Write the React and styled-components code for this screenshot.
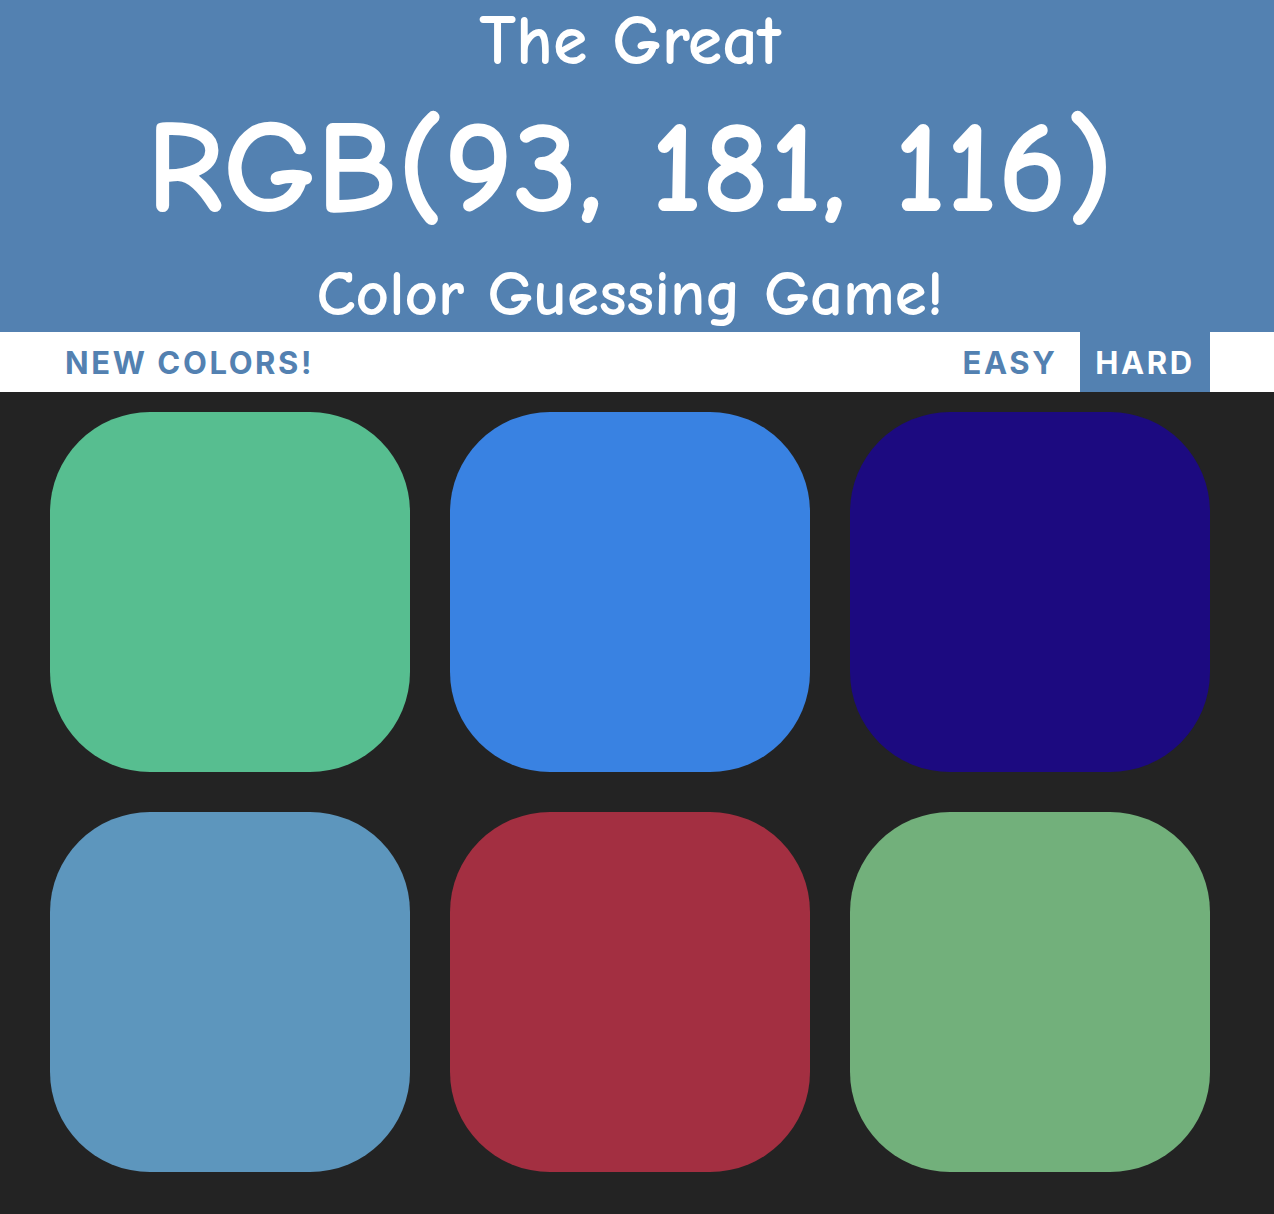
import React from "react";
import styled, { createGlobalStyle } from "styled-components";

const GlobalStyle = createGlobalStyle`
  body {
    margin: 0;
    background: #232323;
    font-family: "Liberation Sans", Arial, sans-serif;
  }
`;

const colors = [
  "#57be90",
  "#3982e2",
  "#1c0a80",
  "#5d96bd",
  "#a32f41",
  "#72b07b",
];

function App() {
  return (
    <>
      <GlobalStyle />
      <Header>
        <SmallLine size="70px">The Great</SmallLine>
        <ColorDisplay>RGB(93, 181, 116)</ColorDisplay>
        <SmallLine size="65px">Color Guessing Game!</SmallLine>
      </Header>
      <Stripe>
        <StripeInner>
          <StripeButton>NEW COLORS!</StripeButton>
          <Modes>
            <ModeButton>EASY</ModeButton>
            <ModeButton selected>HARD</ModeButton>
          </Modes>
        </StripeInner>
      </Stripe>
      <Board>
        {colors.map((c, i) => (
          <Square key={i} style={{ background: c }} />
        ))}
      </Board>
    </>
  );
}

const Header = styled.header`
  background: #5381b1;
  color: #fff;
  text-align: center;
  font-family: "Comic Sans MS", "Comic Neue", "Open Sans", sans-serif;
  font-weight: 700;
  height: 332px;
  box-sizing: border-box;
  padding: 4px 14px 0 0;
  display: flex;
  flex-direction: column;
  align-items: center;
`;

const SmallLine = styled.h2`
  margin: 0;
  font-size: ${(p) => p.size};
  font-weight: 700;
  line-height: 75px;
`;

const ColorDisplay = styled.h1`
  margin: 0;
  font-size: 132px;
  font-weight: 700;
  line-height: 178px;
`;

const Stripe = styled.div`
  background: #fff;
  height: 60px;
`;

const StripeInner = styled.div`
  width: 1160px;
  margin-left: 50px;
  height: 100%;
  display: flex;
  justify-content: space-between;
`;

const StripeButton = styled.button`
  border: none;
  background: transparent;
  color: #5381b1;
  font-family: "Inter", "Liberation Sans", sans-serif;
  font-weight: 700;
  font-size: 31px;
  letter-spacing: 2.6px;
  text-transform: uppercase;
  height: 100%;
  padding: 0 15px;
  cursor: pointer;
`;

const Modes = styled.div`
  display: flex;
  gap: 10px;
  height: 100%;
`;

const ModeButton = styled(StripeButton)`
  width: ${(p) => (p.selected ? "130px" : "120px")};
  background: ${(p) => (p.selected ? "#5381b1" : "#fff")};
  color: ${(p) => (p.selected ? "#fff" : "#5381b1")};
  padding: 0;
`;

const Board = styled.div`
  display: grid;
  grid-template-columns: repeat(3, 360px);
  grid-auto-rows: 360px;
  align-content: start;
  gap: 40px;
  padding: 20px 0 0 50px;
  height: 802px;
`;

const Square = styled.div`
  border-radius: 100px;
`;

export default App;
